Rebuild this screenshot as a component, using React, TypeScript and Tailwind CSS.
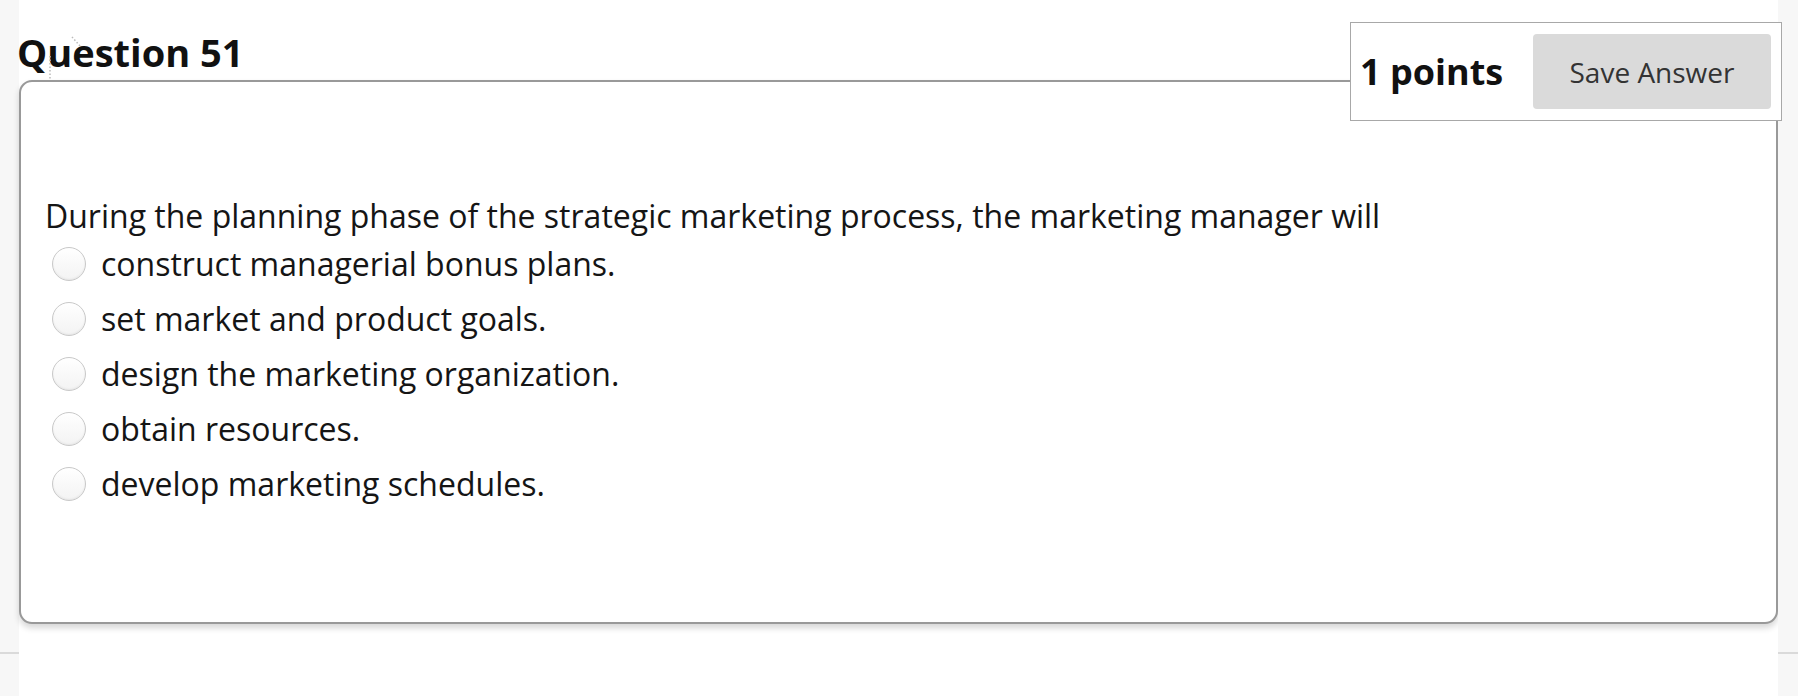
import React from "react";

const options = [
  "construct managerial bonus plans.",
  "set market and product goals.",
  "design the marketing organization.",
  "obtain resources.",
  "develop marketing schedules.",
];

export default function App() {
  return (
    <div className="relative w-[1798px] h-[696px] bg-white flex overflow-hidden font-['Open_Sans',sans-serif] text-[#151515]">
      <div className="w-[19px] h-full bg-[#f7f7f7] flex flex-col shrink-0">
        <div className="h-[652px]" />
        <div className="h-[2px] bg-[#dadada]" />
      </div>
      <div className="flex-1 flex flex-col">
        <div className="pt-[33px] h-[80px] -ml-[2px]">
          <h1 className="text-[38px] leading-[38px] font-bold text-[#111]">Question 51</h1>
        </div>
        <div className="h-[544px] border-2 border-[#999] rounded-[13px] bg-white shadow-[0_4px_6px_rgba(0,0,0,0.16)] pl-[24px] pt-[114px]">
          <div className="text-[32px] leading-[40px]">
            During the planning phase of the strategic marketing process, the marketing manager will
          </div>
          <div className="flex flex-col">
            {options.map((o) => (
              <label key={o} className="h-[55px] flex items-center">
                <span className="ml-[7px] w-[34px] h-[34px] rounded-full border border-[#c9c9c9] bg-gradient-to-b from-white to-[#f3f3f3] shadow-[inset_0_-1px_2px_rgba(0,0,0,0.06)] shrink-0" />
                <span className="ml-[15px] text-[32px] leading-[40px]">{o}</span>
              </label>
            ))}
          </div>
        </div>
      </div>
      <div className="w-[20px] h-full bg-[#f7f7f7] flex flex-col shrink-0">
        <div className="h-[652px]" />
        <div className="h-[2px] bg-[#dadada]" />
      </div>

      <div className="absolute left-[1350px] top-[22px] w-[432px] h-[99px] border border-[#a8a8a8] bg-white flex items-center justify-between pl-[9px] pr-[10px]">
        <span className="text-[36px] font-bold text-[#111] leading-[40px]">1 points</span>
        <button className="w-[238px] h-[75px] rounded-[4px] bg-[#dadada] text-[28px] text-[#333] leading-[40px]">
          Save Answer
        </button>
      </div>

      <svg className="absolute left-[44px] top-[34px]" width="44" height="50" viewBox="0 0 44 50">
        <path d="M28 3 L36 12" stroke="#bbb" strokeWidth="1.5" strokeDasharray="1.5 2" fill="none" />
        <path d="M6 22 L6 46" stroke="#bbb" strokeWidth="1.5" strokeDasharray="1.5 2" fill="none" />
      </svg>
    </div>
  );
}
